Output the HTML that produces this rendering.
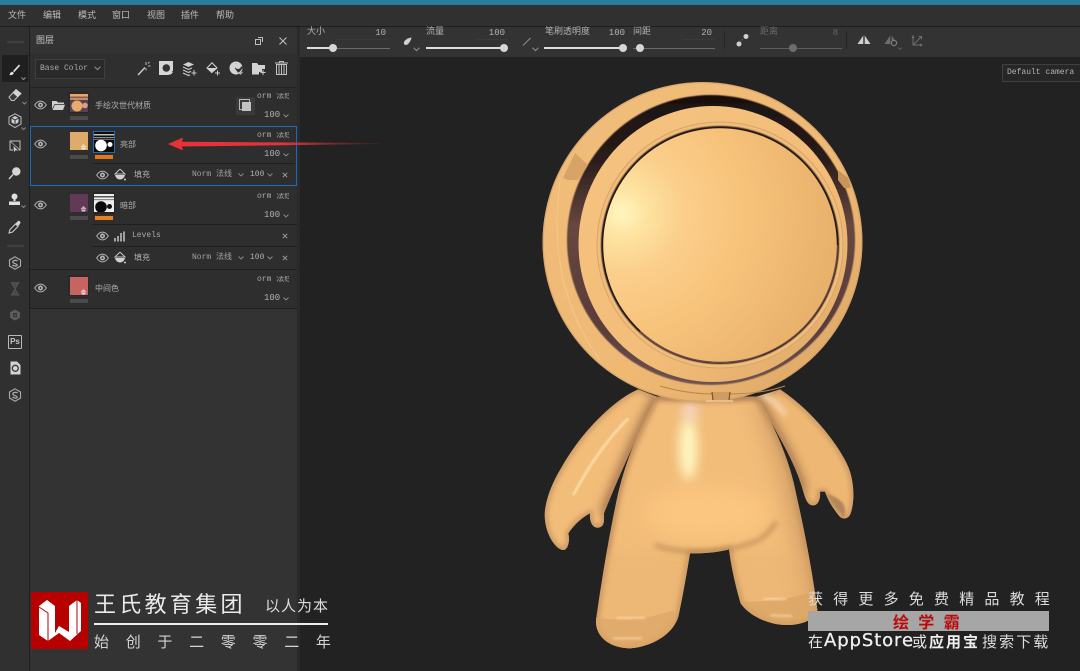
<!DOCTYPE html>
<html lang="zh">
<head>
<meta charset="utf-8">
<title>图层</title>
<style>
html,body{margin:0;padding:0;width:1080px;height:671px;overflow:hidden;background:#222;}
body{position:relative;font-family:"Liberation Sans","Noto Sans CJK SC",sans-serif;color:#bbb;}
.a{position:absolute;white-space:nowrap;line-height:1;}
.m{font-family:"Liberation Mono","Noto Sans CJK SC",monospace;}
.t{font-size:9px;color:#bcbcbc;}
.v{font-size:9px;color:#b0b0b0;}
.s{font-size:8px;color:#b0b0b0;}
.ln{position:absolute;background:#1f1f1f;height:1px;}
.tr{position:absolute;height:1px;background:#6a6a6a;}
.tf{position:absolute;height:2px;background:#ddd;}
.kn{position:absolute;width:8px;height:8px;border-radius:50%;background:#d6d6d6;}
svg.i{position:absolute;overflow:visible;}
.soft{filter:blur(.3px);}
</style>
</head>
<body>
<svg width="0" height="0" style="position:absolute">
<defs>
<symbol id="eye" viewBox="0 0 14 10"><path d="M.7 5C3 1.600 5 .8 7 .8S11 1.600 13.300 5C11 8.400 9 9.200 7 9.200S3 8.400 .7 5Z" fill="none" stroke="#b5b5b5" stroke-width="1"/><circle cx="7" cy="5" r="2.700" fill="#b5b5b5"/><circle cx="7" cy="5" r="1" fill="#333"/></symbol>
<symbol id="fill" viewBox="0 0 12 12"><path d="M6 0 11 5H1Z" fill="none" stroke="#c4c4c4"/><path d="M1 6H11C10.500 8.500 8.500 10.500 6 10.500S1.500 8.500 1 6Z" fill="#d0d0d0"/><circle cx="11" cy="10.500" r="1" fill="#ccc"/></symbol>
<symbol id="chev" viewBox="0 0 6 4"><path d="M.5 .5 3 3 5.500 .5" fill="none" stroke="#8d8d8d" stroke-width=".9"/></symbol>
<symbol id="x" viewBox="0 0 6 6"><path d="M.8 .8 5.200 5.200M5.200 .8 .8 5.200" stroke="#9a9a9a" stroke-width="1"/></symbol>
<symbol id="bucket" viewBox="0 0 7 6"><path d="M3.500 0 6.500 3H.5Z" fill="#eee" opacity=".65"/><path d="M1 3.500H6L5 5.500H2Z" fill="#fff" opacity=".7"/></symbol>
<radialGradient id="faceG" gradientUnits="userSpaceOnUse" cx="622" cy="213" r="230">
<stop offset="0" stop-color="#fff6c0"/><stop offset=".1" stop-color="#fee4a2"/><stop offset=".26" stop-color="#fbcf8c"/><stop offset=".5" stop-color="#f8c47c"/><stop offset="1" stop-color="#e6ae69"/>
</radialGradient>
<linearGradient id="headG" x1="0" y1="0" x2="1" y2="1">
<stop offset="0" stop-color="#f0bd7b"/><stop offset=".6" stop-color="#efb974"/><stop offset="1" stop-color="#d9a465"/>
</linearGradient>
<linearGradient id="cavG" x1="0" y1="0" x2="0" y2="1">
<stop offset="0" stop-color="#1a1010"/><stop offset=".22" stop-color="#2a1c1b"/><stop offset=".45" stop-color="#67473f"/><stop offset=".8" stop-color="#5a3c3b"/><stop offset="1" stop-color="#6e5350"/>
</linearGradient>
<linearGradient id="plateG" x1="0" y1="0" x2="1" y2="1">
<stop offset="0" stop-color="#f5c381"/><stop offset=".6" stop-color="#f2bd78"/><stop offset="1" stop-color="#dca768"/>
</linearGradient>
<linearGradient id="arrowG" gradientUnits="userSpaceOnUse" x1="168" y1="0" x2="380" y2="0">
<stop offset="0" stop-color="#ee2f37"/><stop offset=".55" stop-color="#e0343a"/><stop offset="1" stop-color="#a83338" stop-opacity=".1"/>
</linearGradient>
<filter id="f3" filterUnits="userSpaceOnUse" x="-300" y="-300" width="1700" height="1700"><feGaussianBlur stdDeviation="3"/></filter>
<filter id="f8" filterUnits="userSpaceOnUse" x="-300" y="-300" width="1700" height="1700"><feGaussianBlur stdDeviation="8"/></filter>
<filter id="f16" filterUnits="userSpaceOnUse" x="-300" y="-300" width="1700" height="1700"><feGaussianBlur stdDeviation="16"/></filter>
<filter id="f30" filterUnits="userSpaceOnUse" x="-300" y="-300" width="1700" height="1700"><feGaussianBlur stdDeviation="30"/></filter>
<filter id="px" filterUnits="userSpaceOnUse" x="0" y="0" width="1080" height="671"><feGaussianBlur stdDeviation=".6"/></filter>
<path id="bodyP" d="M380 50C340 130 290 220 260 360C235 480 215 600 198 720C195 770 240 805 300 805C370 800 430 760 445 710C460 640 470 580 480 520C520 520 560 518 597 508C605 570 620 630 632 670C660 710 720 735 770 735C820 735 860 715 862 690C850 600 830 480 800 350C780 240 730 130 680 50Z"/>
<path id="armLP" d="M325 28C250 60 150 160 90 270C60 320 40 380 45 420C50 470 80 510 100 510C115 510 120 480 115 460C135 430 160 410 180 400C178 420 185 445 205 443C225 440 222 420 222 400C250 330 300 210 380 50Z"/>
<path id="armRP" d="M750 28C830 80 910 170 950 250C975 300 975 370 960 405C950 420 935 418 925 405C910 385 895 365 885 335L870 335C872 355 865 378 848 376C830 375 825 350 820 335C800 260 760 190 680 50Z"/>
<clipPath id="bodyClip"><use href="#bodyP"/></clipPath>
<clipPath id="armLClip"><use href="#armLP"/></clipPath>
<clipPath id="armRClip"><use href="#armRP"/></clipPath>
</defs>
</svg>

<!-- backgrounds -->
<div class="a" style="left:0;top:0;width:1080px;height:5px;background:#2a7c9c"></div>
<div class="a" style="left:0;top:5px;width:1080px;height:21px;background:#303030"></div>
<div class="a" style="left:0;top:26px;width:1080px;height:1px;background:#1d1d1d"></div>
<div class="a" style="left:300px;top:27px;width:780px;height:30px;background:#333"></div>
<div class="a" style="left:0;top:27px;width:29px;height:644px;background:#303030"></div>
<div class="a" style="left:29px;top:27px;width:1px;height:644px;background:#1e1e1e"></div>
<div class="a" style="left:30px;top:27px;width:267px;height:644px;background:#333"></div>
<div class="a" style="left:30px;top:88px;width:267px;height:220px;background:#2e2e2e"></div>
<div class="a" style="left:297px;top:27px;width:3px;height:644px;background:#2a2a2a"></div>

<!-- menu -->
<div class="soft">
<div class="a t" style="left:8px;top:11px">文件</div>
<div class="a t" style="left:43px;top:11px">编辑</div>
<div class="a t" style="left:78px;top:11px">模式</div>
<div class="a t" style="left:112px;top:11px">窗口</div>
<div class="a t" style="left:147px;top:11px">视图</div>
<div class="a t" style="left:181px;top:11px">插件</div>
<div class="a t" style="left:216px;top:11px">帮助</div>

<!-- top toolbar -->
<div class="a v" style="left:307px;top:27px">大小</div>
<div class="a v m" style="left:366px;width:20px;text-align:right;top:29px">10</div>
<div class="tr" style="left:335px;top:39px;width:55px;background:#3a3a3a"></div>
<div class="tr" style="left:307px;top:48px;width:83px"></div><div class="tf" style="left:307px;top:47px;width:26px"></div><div class="kn" style="left:329px;top:44px"></div>
<svg class="i" style="left:403px;top:37px" width="9" height="9" viewBox="0 0 9 9"><path d="M8.500 .5C5 1 1 3 .8 6 1 8 3 8.500 4.500 7.500 6.500 6 8 3 8.500 .5Z" fill="#d0d0d0"/></svg>
<svg class="i" style="left:413px;top:47px" width="7" height="5"><use href="#chev"/></svg>
<div class="a v" style="left:426px;top:27px">流量</div>
<div class="a v m" style="left:480px;width:25px;text-align:right;top:29px">100</div>
<div class="tr" style="left:475px;top:39px;width:33px;background:#3a3a3a"></div>
<div class="tf" style="left:426px;top:47px;width:78px"></div><div class="kn" style="left:500px;top:44px"></div>
<svg class="i" style="left:522px;top:37px" width="10" height="9"><path d="M1 8.500 8.500 1" stroke="#a8a8a8" stroke-width=".8"/></svg>
<svg class="i" style="left:532px;top:47px" width="7" height="5"><use href="#chev"/></svg>
<div class="a v" style="left:545px;top:27px">笔刷透明度</div>
<div class="a v m" style="left:600px;width:25px;text-align:right;top:29px">100</div>
<div class="tf" style="left:544px;top:47px;width:79px"></div><div class="kn" style="left:619px;top:44px"></div>
<div class="a v" style="left:633px;top:27px">间距</div>
<div class="a v m" style="left:692px;width:20px;text-align:right;top:29px">20</div>
<div class="tr" style="left:682px;top:39px;width:33px;background:#3a3a3a"></div>
<div class="tr" style="left:633px;top:48px;width:82px"></div><div class="kn" style="left:636px;top:44px"></div>
<div class="a" style="left:724px;top:31px;width:1px;height:18px;background:#242424"></div>
<svg class="i" style="left:736px;top:33px" width="13" height="14"><circle cx="3" cy="11" r="2.500" fill="#d0d0d0"/><circle cx="10" cy="3.500" r="2.500" fill="#d0d0d0"/><path d="M4.500 8.500 7 6" stroke="#777" stroke-dasharray="1 1"/></svg>
<div class="a v" style="left:760px;top:27px;color:#666">距离</div>
<div class="a v m" style="left:828px;width:10px;text-align:right;top:29px;color:#666">8</div>
<div class="tr" style="left:760px;top:48px;width:82px;background:#5c5c5c"></div><div class="kn" style="left:789px;top:44px;background:#6c6c6c"></div>
<div class="a" style="left:846px;top:31px;width:1px;height:18px;background:#242424"></div>
<svg class="i" style="left:857px;top:35px" width="14" height="11"><path d="M6.300 .5V9H.5ZM7.700 .5V9H13.500Z" fill="#cfcfcf"/></svg>
<svg class="i" style="left:884px;top:35px" width="18" height="16"><path d="M6.300 .5V9H.5ZM7.700 .5 12 7H7.700Z" fill="#6e6e6e"/><circle cx="10" cy="8" r="2.600" fill="#333" stroke="#7c7c7c" stroke-width="1.200"/><path d="M14 12.500 16 14.500 18 12.500" fill="none" stroke="#666" stroke-width=".8"/></svg>
<svg class="i" style="left:911px;top:35px" width="13" height="12"><path d="M2 1V10H11M2 10 10 2M7.500 1.500H10.500V4.500M1 3 2 1 3 3M9 9 11 10 9 11" fill="none" stroke="#6e6e6e"/></svg>

<!-- left toolbar -->
<div class="a" style="left:2px;top:55px;width:26px;height:27px;background:#1f1f1f"></div>
<div class="a" style="left:7px;top:41px;width:17px;height:2px;background:#3f3f3f"></div>
<svg class="i" style="left:8px;top:61px" width="20" height="20"><path d="M1.500 14C1.800 12 3 10.700 4.600 10.700L5.800 12C5.600 13.500 3.800 14.500 1.500 14Z" fill="#ddd"/><path d="M5 10 11 3.500 12.200 4.600 6.200 11.200Z" fill="#ddd"/><path d="M13.500 16.500 15.500 18.500 17.500 16.500" fill="none" stroke="#999"/></svg>
<svg class="i" style="left:7px;top:87px" width="20" height="20"><path d="M2 10 9 2.500 14 6.500 7 13.500 4.500 13.500Z" fill="#3a3a3a" stroke="#c4c4c4"/><path d="M9 2.500 14 6.500 10.500 10 5.800 6Z" fill="#d4d4d4"/><path d="M15.500 15 17.500 17 19.500 15" fill="none" stroke="#888"/></svg>
<svg class="i" style="left:8px;top:113px" width="20" height="20"><path d="M7 .8 13 4V11L7 14.500 1 11V4Z" fill="none" stroke="#bdbdbd"/><path d="M3.500 5 7 3 10.500 5V9.500L7 11.500 3.500 9.500Z" fill="#cfcfcf"/><path d="M3.500 5 7 7 10.500 5M7 7V11.500" stroke="#333" fill="none"/><path d="M13.500 14.500 15.500 16.500 17.500 14.500" fill="none" stroke="#888"/></svg>
<svg class="i" style="left:9px;top:140px" width="13" height="14"><path d="M1 1H11V10H1Z" fill="none" stroke="#c0c0c0"/><path d="M1.500 1.500 10.500 9.500" stroke="#999"/><path d="M4 5 9.500 10.500 6.500 10.700 5 13Z" fill="#ccc" stroke="#333" stroke-width=".6"/></svg>
<svg class="i" style="left:8px;top:166px" width="14" height="14"><path d="M1 13 5 8.500" stroke="#d2d2d2" stroke-width="1.400"/><circle cx="8.300" cy="5.500" r="4.200" fill="#d6d6d6"/></svg>
<svg class="i" style="left:8px;top:193px" width="19" height="18"><circle cx="6.500" cy="3.500" r="3" fill="#e0e0e0"/><path d="M5.500 6H7.500V8H5.500Z" fill="#e0e0e0"/><path d="M1 8.500H12V12H1Z" fill="#e0e0e0"/><path d="M13.500 12.500 15.500 14.500 17.500 12.500" fill="none" stroke="#888"/></svg>
<svg class="i" style="left:8px;top:220px" width="14" height="14"><path d="M1 13 2 9.500 7.500 4 10 6.500 4.500 12Z" fill="none" stroke="#cfcfcf"/><path d="M7.500 3.500 10 1C11 .2 13 2 12.300 3.200L10.500 6Z" fill="#d4d4d4"/></svg>
<div class="a" style="left:7px;top:245px;width:17px;height:2px;background:#3f3f3f"></div>
<svg class="i" style="left:8px;top:256px" width="14" height="14"><path d="M7 .8 12.500 4V10L7 13.200 1.500 10V4Z" fill="none" stroke="#aaa" stroke-width="1.100"/><path d="M9.500 5C8.500 4 5 4 4.800 5.800S9.300 7.700 9.200 9.200 5.500 10 4.500 9" fill="none" stroke="#aaa" stroke-width="1.300"/></svg>
<svg class="i" style="left:10px;top:282px" width="10" height="14"><path d="M.5 .8H9.500M.5 13H9.500M1.500 1 5 7 8.500 13H1.500L5 7 8.500 1Z" fill="#4a4a4a" stroke="#555"/></svg>
<svg class="i" style="left:9px;top:309px" width="12" height="12"><path d="M6 .5 11 3.300V8.700L6 11.500 1 8.700V3.300Z" fill="#5c5c5c"/><path d="M8 4.500H4.500V6H7.500V7.700H4" fill="none" stroke="#333"/></svg>
<div class="a" style="left:8px;top:335px;width:12px;height:12px;border:1px solid #b9b9b9;border-radius:1px;font-size:8px;line-height:12px;text-align:center;color:#c6c6c6;font-weight:bold">Ps</div>
<svg class="i" style="left:10px;top:361px" width="11" height="14"><path d="M.5 .5H7L10.500 4V13.500H.5Z" fill="#d2d2d2"/><circle cx="5.300" cy="7.300" r="3" fill="none" stroke="#333" stroke-width="1.300"/></svg>
<svg class="i" style="left:8px;top:388px" width="14" height="14"><path d="M7 .8 12.500 4V10L7 13.200 1.500 10V4Z" fill="none" stroke="#aaa" stroke-width="1.100"/><path d="M9.500 5C8.500 4 5 4 4.800 5.800S9.300 7.700 9.200 9.200 5.500 10 4.500 9" fill="none" stroke="#aaa" stroke-width="1.300"/></svg>

<!-- panel header -->
<div class="a t" style="left:36px;top:36px;color:#c4c4c4">图层</div>
<svg class="i" style="left:255px;top:37px" width="8" height="8"><path d="M.5 2.500V7.500H5.500V2.500ZM3 .5H7.500V5" fill="none" stroke="#bdbdbd"/></svg>
<svg class="i" style="left:279px;top:37px" width="8" height="8"><path d="M.5 .5 7.500 7.500M7.500 .5 .5 7.500" stroke="#c0c0c0"/></svg>
<div class="a" style="left:30px;top:53px;width:267px;height:34px;background:#2f2f2f"></div>
<div class="a" style="left:30px;top:87px;width:267px;height:1px;background:#242424"></div>
<div class="a" style="left:35px;top:59px;width:68px;height:18px;border:1px solid #3f3f3f;background:#2a2a2a"></div>
<div class="a m s" style="left:40px;top:65px;color:#a9a9a9">Base Color</div>
<svg class="i" style="left:94px;top:66px" width="7" height="5"><use href="#chev"/></svg>
<!-- panel icons -->
<svg class="i" style="left:137px;top:61px" width="14" height="15"><path d="M1 14 8 6.500" stroke="#c8c8c8" stroke-width="1.500"/><path d="M9 1V4M11 5H13.500M11 2.500 12.500 1M9 7V9.500" stroke="#b9b9b9"/></svg>
<svg class="i" style="left:159px;top:61px" width="15" height="15"><path d="M0 0H14V9.500L10 14H0Z" fill="#d6d6d6"/><circle cx="7.300" cy="7" r="3.800" fill="#333"/><path d="M9.500 11 11.500 13 13.500 11" fill="none" stroke="#ddd"/></svg>
<svg class="i" style="left:183px;top:62px" width="14" height="14"><path d="M5.500 0 11 2.500 5.500 5 0 2.500Z" fill="#d0d0d0"/><path d="M0 5 5.500 7.500 9 6M0 8 5.500 10.500 8 9.300M0 11 5.500 13.500 7 13" fill="none" stroke="#c8c8c8" stroke-width="1.200"/><path d="M11 8V13.500M8.500 11H13.500" stroke="#ccc"/></svg>
<svg class="i" style="left:206px;top:62px" width="15" height="14"><path d="M6 .8 11 6 5.800 10.500 1 6Z" fill="none" stroke="#d0d0d0" stroke-width="1.100"/><path d="M1.500 6H10.500L5.800 10Z" fill="#d4d4d4"/><path d="M11.500 8.500V13.500M9 11H14" stroke="#ccc"/></svg>
<svg class="i" style="left:229px;top:61px" width="15" height="15"><circle cx="7" cy="7" r="6.500" fill="#d4d4d4"/><path d="M7.500 2 14 6.500 9.500 12.500 6 7.500Z" fill="#333"/><circle cx="9" cy="5" r="3" fill="#d4d4d4"/><path d="M9.500 11 11.500 13 13.500 11" fill="none" stroke="#ccc"/></svg>
<svg class="i" style="left:252px;top:62px" width="15" height="13"><path d="M0 1H5L6.500 3H13V7H10V10H7V12.500H0Z" fill="#d2d2d2"/><path d="M11 8V13M8.500 10.500H13.500" stroke="#ccc"/></svg>
<svg class="i" style="left:275px;top:61px" width="14" height="14"><path d="M0 2H13M4.500 2V.5H8.500V2" fill="none" stroke="#c0c0c0"/><path d="M1.500 3.500H11.500V13.500H1.500Z" fill="none" stroke="#c0c0c0"/><path d="M4 4V13M6.500 4V13M9 4V13" stroke="#c0c0c0"/></svg>

<!-- row 1 -->
<svg class="i" style="left:34px;top:100px" width="13" height="10"><use href="#eye"/></svg>
<svg class="i" style="left:52px;top:100px" width="13" height="10"><path d="M0 1H4.500L6 2.500H12V4H2.500L0 9.500Z" fill="#cfcfcf"/><path d="M2.800 4.800H13L11 10H.7Z" fill="#cfcfcf"/></svg>
<div class="a" style="left:68px;top:92px;width:21px;height:21px;background:#292929"></div>
<svg class="i" style="left:70px;top:94px" width="18" height="18"><rect width="18" height="18" fill="#5b4055"/><rect y="0" width="18" height="2.500" fill="#e8a968"/><rect y="2.500" width="18" height="1.500" fill="#8a5a55"/><rect y="4" width="18" height="2" fill="#c48d6a"/><circle cx="7" cy="12" r="5.500" fill="#e7ad66"/><circle cx="15" cy="11.500" r="2.800" fill="#d5a283"/></svg>
<div class="a" style="left:70px;top:116px;width:18px;height:4px;background:#4b4b4b"></div>
<div class="a s" style="left:95px;top:102px">手绘次世代材质</div>
<div class="a s m" style="left:257px;top:93px;color:#a9a9a9;width:32px;overflow:hidden;text-align:right">orm 法线</div>
<div class="a" style="left:236px;top:97px;width:19px;height:18px;background:#3a3a3a;border-radius:2px"></div>
<div class="a" style="left:239px;top:99px;width:9px;height:9px;border:1px solid #b8b8b8"></div>
<div class="a" style="left:242px;top:102px;width:9px;height:9px;background:#c2c2c2"></div>
<div class="a v m" style="left:264px;top:111px">100</div>
<svg class="i" style="left:283px;top:114px" width="6" height="4"><use href="#chev"/></svg>

<!-- row 2 selected -->
<div class="a" style="left:30px;top:126px;width:265px;height:58px;border:1px solid #1a6dbb"></div>
<svg class="i" style="left:34px;top:139px" width="13" height="10"><use href="#eye"/></svg>
<div class="a" style="left:70px;top:132px;width:18px;height:18px;background:#deab6b"></div>
<svg class="i" style="left:80px;top:144px" width="7" height="6"><use href="#bucket"/></svg>
<div class="a" style="left:70px;top:155px;width:18px;height:4px;background:#4b4b4b"></div>
<div class="a" style="left:93px;top:131px;width:20px;height:20px;background:#111;border:1px solid #1a6dbb"></div>
<svg class="i" style="left:94px;top:132px" width="20" height="20"><rect width="20" height="20" fill="#0c0c0c"/><rect y="2" width="20" height="1.500" fill="#bfbfbf"/><rect y="5" width="20" height="1.200" fill="#8f8f8f"/><rect y="7" width="20" height="1" fill="#6a6a6a"/><circle cx="7" cy="13.500" r="5.800" fill="#fff"/><circle cx="16" cy="12.500" r="2.500" fill="#fff"/></svg>
<div class="a" style="left:95px;top:155px;width:18px;height:4px;background:#e5771a"></div>
<div class="a s" style="left:120px;top:141px">亮部</div>
<div class="a s m" style="left:257px;top:132px;color:#a9a9a9;width:32px;overflow:hidden;text-align:right">orm 法线</div>
<div class="a v m" style="left:264px;top:150px">100</div>
<svg class="i" style="left:283px;top:153px" width="6" height="4"><use href="#chev"/></svg>
<div class="ln" style="left:92px;top:163px;width:203px"></div>
<svg class="i" style="left:96px;top:170px" width="13" height="10"><use href="#eye"/></svg>
<svg class="i" style="left:114px;top:169px" width="12" height="12"><use href="#fill"/></svg>
<div class="a s" style="left:134px;top:171px">填充</div>
<div class="a s m" style="left:192px;top:171px;color:#a2a2a2">Norm 法线</div>
<svg class="i" style="left:238px;top:173px" width="6" height="4"><use href="#chev"/></svg>
<div class="a s m" style="left:250px;top:171px">100</div>
<svg class="i" style="left:267px;top:173px" width="6" height="4"><use href="#chev"/></svg>
<svg class="i" style="left:282px;top:172px" width="6" height="6"><use href="#x"/></svg>

<!-- row 3 -->
<div class="ln" style="left:92px;top:224px;width:205px"></div>
<div class="ln" style="left:92px;top:246px;width:205px"></div>
<div class="ln" style="left:30px;top:269px;width:267px"></div>
<svg class="i" style="left:34px;top:200px" width="13" height="10"><use href="#eye"/></svg>
<div class="a" style="left:70px;top:194px;width:18px;height:18px;background:#623a58"></div>
<svg class="i" style="left:80px;top:206px" width="7" height="6"><use href="#bucket"/></svg>
<div class="a" style="left:70px;top:216px;width:18px;height:4px;background:#4b4b4b"></div>
<div class="a" style="left:93px;top:192px;width:22px;height:22px;background:#262626"></div>
<svg class="i" style="left:94px;top:194px" width="20" height="20"><rect width="20" height="20" fill="#eee"/><rect y="2" width="20" height="1.500" fill="#555"/><rect y="5" width="20" height="1.200" fill="#888"/><circle cx="7" cy="13" r="5.800" fill="#0a0a0a"/><circle cx="15.500" cy="12.500" r="2.500" fill="#111"/><rect y="18" width="20" height="2" fill="#222"/></svg>
<div class="a" style="left:95px;top:216px;width:18px;height:4px;background:#e5821f"></div>
<div class="a s" style="left:120px;top:202px">暗部</div>
<div class="a s m" style="left:257px;top:193px;color:#a9a9a9;width:32px;overflow:hidden;text-align:right">orm 法线</div>
<div class="a v m" style="left:264px;top:211px">100</div>
<svg class="i" style="left:283px;top:214px" width="6" height="4"><use href="#chev"/></svg>
<svg class="i" style="left:96px;top:231px" width="13" height="10"><use href="#eye"/></svg>
<svg class="i" style="left:114px;top:231px" width="11" height="11"><path d="M1 7V10.500M4 5V10.500M7 2V10.500M10 .5V10.500" stroke="#c6c6c6" stroke-width="1.500"/></svg>
<div class="a s m" style="left:132px;top:232px;color:#a9a9a9">Levels</div>
<svg class="i" style="left:282px;top:233px" width="6" height="6"><use href="#x"/></svg>
<svg class="i" style="left:96px;top:253px" width="13" height="10"><use href="#eye"/></svg>
<svg class="i" style="left:114px;top:252px" width="12" height="12"><use href="#fill"/></svg>
<div class="a s" style="left:134px;top:254px">填充</div>
<div class="a s m" style="left:192px;top:254px;color:#a2a2a2">Norm 法线</div>
<svg class="i" style="left:238px;top:256px" width="6" height="4"><use href="#chev"/></svg>
<div class="a s m" style="left:250px;top:254px">100</div>
<svg class="i" style="left:267px;top:256px" width="6" height="4"><use href="#chev"/></svg>
<svg class="i" style="left:282px;top:255px" width="6" height="6"><use href="#x"/></svg>

<!-- row 4 -->
<svg class="i" style="left:34px;top:283px" width="13" height="10"><use href="#eye"/></svg>
<div class="a" style="left:68px;top:275px;width:21px;height:21px;background:#292929"></div>
<div class="a" style="left:70px;top:277px;width:18px;height:18px;background:#c66462"></div>
<svg class="i" style="left:80px;top:289px" width="7" height="6"><use href="#bucket"/></svg>
<div class="a" style="left:70px;top:299px;width:18px;height:4px;background:#4b4b4b"></div>
<div class="a s" style="left:95px;top:285px">中间色</div>
<div class="a s m" style="left:257px;top:276px;color:#a9a9a9;width:32px;overflow:hidden;text-align:right">orm 法线</div>
<div class="a v m" style="left:264px;top:294px">100</div>
<svg class="i" style="left:283px;top:297px" width="6" height="4"><use href="#chev"/></svg>
<div class="ln" style="left:30px;top:308px;width:267px"></div>

<!-- camera label -->
<div class="a" style="left:1002px;top:64px;width:78px;height:16px;border:1px solid #3f3f3f;border-right:0;background:#272727;box-sizing:content-box"></div>
<div class="a m" style="left:1007px;top:69px;font-size:8px;color:#b4b4b4">Default camera</div>
</div>

<!-- character -->
<svg class="a" style="left:0;top:0" width="1080" height="671" viewBox="0 0 1080 671">
<g transform="translate(530 380) scale(.33333)">
  <!-- left arm -->
  <use href="#armLP" fill="#f2bc79"/>
  <g clip-path="url(#armLClip)">
    <use href="#armLP" fill="none" stroke="#c39160" stroke-width="14" filter="url(#f8)"/>
    <path d="M222 400C250 330 300 210 380 50" fill="none" stroke="#a87850" stroke-width="28" filter="url(#f16)"/>
    <path d="M130 345C170 270 220 190 295 115" fill="none" stroke="#fff3c4" stroke-width="5" filter="url(#f3)"/>
  </g>
  <!-- right arm -->
  <use href="#armRP" fill="#eeb874"/>
  <g clip-path="url(#armRClip)">
    <use href="#armRP" fill="none" stroke="#c39160" stroke-width="14" filter="url(#f8)"/>
    <path d="M680 50C760 190 800 260 820 335" fill="none" stroke="#a87850" stroke-width="24" filter="url(#f16)"/>
    <path d="M888 340C905 370 925 395 942 412C955 370 930 355 888 340Z" fill="#b5855a" filter="url(#f3)"/>
    <path d="M695 42C720 55 745 75 765 105" fill="none" stroke="#f7dcc0" stroke-width="12" filter="url(#f8)"/>
  </g>
  <!-- body -->
  <use href="#bodyP" fill="#f2bc79"/>
  <g clip-path="url(#bodyClip)">
    <use href="#bodyP" fill="none" stroke="#bb8a58" stroke-width="18" filter="url(#f8)"/>
    <path d="M700 60C780 240 830 480 862 690" fill="none" stroke="#c89660" stroke-width="60" filter="url(#f30)" opacity=".7"/>
    <path d="M200 520H870V830H200Z" fill="#e6b070" opacity=".35" filter="url(#f16)"/>
    <ellipse cx="530" cy="400" rx="190" ry="85" fill="#fbc67f" filter="url(#f30)"/>
    <!-- crotch shading -->
    <path d="M375 495C450 525 600 522 690 478C712 462 728 445 738 425" fill="none" stroke="#b58551" stroke-width="9" filter="url(#f8)"/>
    <!-- highlight -->
    <ellipse cx="475" cy="205" rx="28" ry="95" fill="#fff6c0" filter="url(#f16)"/>
    <ellipse cx="480" cy="95" rx="22" ry="35" fill="#f6d6c2" filter="url(#f16)"/>
    <!-- neck shadow -->
    <path d="M360 40H700V55C600 70 460 70 360 55Z" fill="#a87a55" filter="url(#f8)" opacity=".65"/>
    <!-- feet -->
    <path d="M195 712C260 725 350 720 432 690V830H190Z" fill="#dba666" opacity=".7"/>
    <path d="M625 664C690 668 780 660 865 630V760H620Z" fill="#d8a464" opacity=".7"/>
    <path d="M260 713 345 714M250 775H335M700 657H770M720 706 785 708" stroke="#ffe6bc" stroke-width="3.500" filter="url(#f3)"/>
  </g>
</g>

<!-- head -->
<circle cx="702.500" cy="242" r="160" fill="url(#headG)"/>
<circle cx="702.500" cy="242" r="159.300" fill="none" stroke="#c99a68" stroke-width="1.200" opacity=".6"/>
<path d="M560 181C553 235 556 300 600 360" fill="none" stroke="#f8cd96" stroke-width="1" opacity=".65"/>
<!-- cavity -->
<ellipse cx="711" cy="240" rx="144" ry="145" fill="url(#cavG)" filter="url(#px)"/>
<!-- small tabs on outer ring -->
<path d="M575 153 588 165 578 180H568L563 178Z" fill="#d8a367"/>
<path d="M838 170 848 178 851 188 844 188 838 180Z" fill="#c99457"/>
<!-- plate -->
<ellipse cx="713" cy="244" rx="134.500" ry="138" fill="url(#plateG)"/>
<circle cx="720" cy="245" r="123" fill="#f0bd7c" stroke="#d8a567" stroke-width="1"/>
<circle cx="720" cy="245" r="119" fill="#241717" filter="url(#px)"/>
<path d="M837 245A117.500 117.500 0 0 1 640 331" fill="none" stroke="#6b4a47" stroke-width="2.200"/>
<circle cx="720" cy="245" r="116.800" fill="url(#faceG)"/>
<!-- lower seam and neck tab -->
<path d="M660 386C680 392 700 394 712 394M730 394C750 394 770 391 785 386" fill="none" stroke="#b8854f" stroke-width="1"/>
<path d="M712 392H730V398L729 402H712Z" fill="#cf9c63"/>
<path d="M712 392 713 400M730 392 729 400" stroke="#7c5330" stroke-width="1.200"/>
<path d="M706 401H733" stroke="#f0c995" stroke-width="1.500"/>
</svg>

<!-- red arrow -->
<svg class="a" style="left:0;top:0" width="1080" height="671">
<path d="M168 144 183 137.500 182 141.800 380 143 380 144 182 146.500 183 150.500Z" fill="url(#arrowG)"/>
</svg>

<!-- logo left -->
<div class="a" style="left:31px;top:592px;width:57px;height:57px;background:#b70000"></div>
<svg class="a" style="left:31px;top:592px" width="57" height="57" viewBox="0 0 57 57">
<path d="M8 14 16 8 24 14V41L28 34 38 40V14L46 8 50 11V39L39 49 28 41 17 49 8 43Z" fill="#fff"/>
<path d="M8 15 17 21V49M46 8V42" fill="none" stroke="#b70000" stroke-width="1"/>
</svg>
<div class="a" style="left:94px;top:592px;font-size:22px;letter-spacing:3.300px;color:#eaeaea;font-family:'Noto Sans CJK SC',sans-serif">王氏教育集团</div>
<div class="a" style="left:265px;top:598px;font-size:15px;color:#dcdcdc;letter-spacing:1px;font-family:'Noto Sans CJK SC',sans-serif">以人为本</div>
<div class="a" style="left:94px;top:623px;width:234px;height:2px;background:#eee"></div>
<div class="a" style="left:94px;top:634px;font-size:15px;letter-spacing:16.700px;color:#d4d4d4;font-family:'Noto Sans CJK SC',sans-serif">始创于二零零二年</div>

<!-- right promo -->
<div class="a" style="left:808px;top:591px;font-size:15px;letter-spacing:10.200px;color:#dcdcdc;font-family:'Noto Sans CJK SC',sans-serif">获得更多免费精品教程</div>
<div class="a" style="left:808px;top:611px;width:241px;height:20px;background:#a6a6a6"></div>
<div class="a" style="left:893px;top:613px;font-size:16px;letter-spacing:9.300px;color:#bb0a0a;font-weight:bold;font-family:'Noto Sans CJK SC',sans-serif">绘学霸</div>
<div class="a" style="left:808px;top:634px;font-size:15px;color:#e6e6e6;font-family:'Noto Sans CJK SC',sans-serif">在</div>
<div class="a" style="left:824px;top:632px;font-size:18px;letter-spacing:.9px;color:#f0f0f0;-webkit-text-stroke:.3px #f0f0f0;font-family:'DejaVu Sans','Liberation Sans',sans-serif">AppStore</div>
<div class="a" style="left:912px;top:634px;font-size:15px;color:#e6e6e6;font-family:'Noto Sans CJK SC',sans-serif">或</div>
<div class="a" style="left:929px;top:634px;font-size:15px;letter-spacing:2px;color:#f0f0f0;font-weight:bold;font-family:'Noto Sans CJK SC',sans-serif">应用宝</div>
<div class="a" style="left:982px;top:634px;font-size:15px;letter-spacing:2.100px;color:#dcdcdc;font-family:'Noto Sans CJK SC',sans-serif">搜索下载</div>
</body>
</html>
